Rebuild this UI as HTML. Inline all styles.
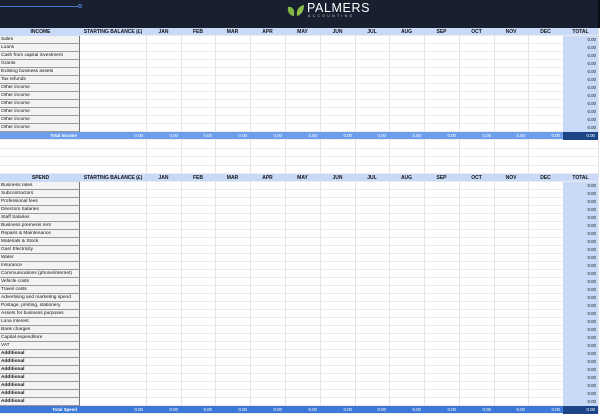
<!DOCTYPE html>
<html><head><meta charset="utf-8"><style>
*{margin:0;padding:0;box-sizing:border-box}
body{width:600px;height:414px;overflow:hidden;background:#fff;font-family:"Liberation Sans",Arial,sans-serif;position:relative}
#hd{position:absolute;left:0;top:0;width:600px;height:28px;background:#182030}
.vl{position:absolute;top:28px;height:386px;width:1px;background:#e3e3e3}
#g{position:absolute;left:0;top:28px;width:598px}
.r{position:relative;height:8px;border-bottom:1px solid #ececec;font-size:4.8px;line-height:8px;color:#111}
.l{position:absolute;left:0;top:0;width:80px;height:8px;background:#f3f3f3;border-right:1px solid #777;border-bottom:1px solid #999;padding-left:1px;white-space:nowrap;overflow:hidden}
.t{position:absolute;left:563px;top:0;width:35px;height:8px;background:#c9daf8;text-align:right;padding-right:2px;font-size:4.4px}
.h{background:#c9daf8;font-weight:bold;font-size:5px}
.h span{position:absolute;top:0;text-align:center}
.h .l{background:#c9daf8;text-align:center;border:none}
.tot{background:#6d9eeb;color:#fff;font-size:4.4px}
.tot span{position:absolute;top:0;text-align:right;padding-right:3px}
.ts{background:#3c78d8}
.b{font-weight:bold}
.e{height:8.5px}
</style></head><body>
<div id="hd">
<div style="position:absolute;left:0;top:6px;width:79px;height:1px;background:#4a78c8"></div>
<div style="position:absolute;left:78px;top:4px;width:4px;height:4px;border:1px solid #4a78c8;border-radius:50%"></div>
<svg style="position:absolute;left:287px;top:4px" width="18" height="14" viewBox="0 0 18 14">
<path d="M1 3 C5 2 8 5 7 12 C3 12 0 8 1 3Z" fill="#7fb942"/>
<path d="M10 12 C9 6 12 2 17 1 C17 7 14 11 10 12Z" fill="#8cc04b"/>
</svg>
<div style="position:absolute;left:307px;top:2px;color:#fff;font-size:12.5px;letter-spacing:0.6px;line-height:13px">PALMERS</div>
<div style="position:absolute;left:308px;top:14px;color:#ccc;font-size:3.5px;letter-spacing:2.3px;line-height:4px">ACCOUNTING</div>
<div style="position:absolute;left:598px;top:0;width:2px;height:28px;background:#0b0f18"></div>
</div>
<div class="vl" style="left:146px"></div><div class="vl" style="left:181px"></div><div class="vl" style="left:215px"></div><div class="vl" style="left:250px"></div><div class="vl" style="left:285px"></div><div class="vl" style="left:320px"></div><div class="vl" style="left:355px"></div><div class="vl" style="left:389px"></div><div class="vl" style="left:424px"></div><div class="vl" style="left:459px"></div><div class="vl" style="left:494px"></div><div class="vl" style="left:528px"></div><div class="vl" style="left:598px"></div>
<div id="g">
<div class="r h"><div class="l">INCOME</div><span style="left:80px;width:66px">STARTING BALANCE (£)</span><span style="left:146px;width:35px">JAN</span><span style="left:181px;width:34px">FEB</span><span style="left:215px;width:35px">MAR</span><span style="left:250px;width:35px">APR</span><span style="left:285px;width:35px">MAY</span><span style="left:320px;width:35px">JUN</span><span style="left:355px;width:34px">JUL</span><span style="left:389px;width:35px">AUG</span><span style="left:424px;width:35px">SEP</span><span style="left:459px;width:35px">OCT</span><span style="left:494px;width:34px">NOV</span><span style="left:528px;width:35px">DEC</span><span style="left:563px;width:35px">TOTAL</span></div>
<div class="r"><div class="l">Sales</div><div class="t">0.00</div></div>
<div class="r"><div class="l">Loans</div><div class="t">0.00</div></div>
<div class="r"><div class="l">Cash from capital investment</div><div class="t">0.00</div></div>
<div class="r"><div class="l">Grants</div><div class="t">0.00</div></div>
<div class="r"><div class="l">Existing business assets</div><div class="t">0.00</div></div>
<div class="r"><div class="l">Tax refunds</div><div class="t">0.00</div></div>
<div class="r"><div class="l">Other income</div><div class="t">0.00</div></div>
<div class="r"><div class="l">Other income</div><div class="t">0.00</div></div>
<div class="r"><div class="l">Other income</div><div class="t">0.00</div></div>
<div class="r"><div class="l">Other income</div><div class="t">0.00</div></div>
<div class="r"><div class="l">Other income</div><div class="t">0.00</div></div>
<div class="r"><div class="l">Other income</div><div class="t">0.00</div></div>
<div class="r tot"><span style="left:0;width:80px;font-weight:bold">Total Income</span><span style="left:80px;width:66px">0.00</span><span style="left:146px;width:35px">0.00</span><span style="left:181px;width:34px">0.00</span><span style="left:215px;width:35px">0.00</span><span style="left:250px;width:35px">0.00</span><span style="left:285px;width:35px">0.00</span><span style="left:320px;width:35px">0.00</span><span style="left:355px;width:34px">0.00</span><span style="left:389px;width:35px">0.00</span><span style="left:424px;width:35px">0.00</span><span style="left:459px;width:35px">0.00</span><span style="left:494px;width:34px">0.00</span><span style="left:528px;width:35px">0.00</span><span style="left:563px;width:35px;background:#1c4587;height:8px">0.00</span></div>
<div class="r e"></div><div class="r e"></div><div class="r e"></div><div class="r e"></div>
<div class="r h"><div class="l">SPEND</div><span style="left:80px;width:66px">STARTING BALANCE (£)</span><span style="left:146px;width:35px">JAN</span><span style="left:181px;width:34px">FEB</span><span style="left:215px;width:35px">MAR</span><span style="left:250px;width:35px">APR</span><span style="left:285px;width:35px">MAY</span><span style="left:320px;width:35px">JUN</span><span style="left:355px;width:34px">JUL</span><span style="left:389px;width:35px">AUG</span><span style="left:424px;width:35px">SEP</span><span style="left:459px;width:35px">OCT</span><span style="left:494px;width:34px">NOV</span><span style="left:528px;width:35px">DEC</span><span style="left:563px;width:35px">TOTAL</span></div>
<div class="r"><div class="l">Business rates</div><div class="t">0.00</div></div>
<div class="r"><div class="l">Subcontractors</div><div class="t">0.00</div></div>
<div class="r"><div class="l">Professional fees</div><div class="t">0.00</div></div>
<div class="r"><div class="l">Directors Salaries</div><div class="t">0.00</div></div>
<div class="r"><div class="l">Staff Salaries</div><div class="t">0.00</div></div>
<div class="r"><div class="l">Business premesis rent</div><div class="t">0.00</div></div>
<div class="r"><div class="l">Repairs &amp; Maintenance</div><div class="t">0.00</div></div>
<div class="r"><div class="l">Materials &amp; Stock</div><div class="t">0.00</div></div>
<div class="r"><div class="l">Gas/ Electricity</div><div class="t">0.00</div></div>
<div class="r"><div class="l">Water</div><div class="t">0.00</div></div>
<div class="r"><div class="l">Insurance</div><div class="t">0.00</div></div>
<div class="r"><div class="l">Communications (phone/internet)</div><div class="t">0.00</div></div>
<div class="r"><div class="l">Vehicle costs</div><div class="t">0.00</div></div>
<div class="r"><div class="l">Travel costs</div><div class="t">0.00</div></div>
<div class="r"><div class="l">Advertising and marketing spend</div><div class="t">0.00</div></div>
<div class="r"><div class="l">Postage, printing, stationery</div><div class="t">0.00</div></div>
<div class="r"><div class="l">Assets for business purposes</div><div class="t">0.00</div></div>
<div class="r"><div class="l">Lona interest</div><div class="t">0.00</div></div>
<div class="r"><div class="l">Bank charges</div><div class="t">0.00</div></div>
<div class="r"><div class="l">Capital expenditure</div><div class="t">0.00</div></div>
<div class="r"><div class="l">VAT</div><div class="t">0.00</div></div>
<div class="r"><div class="l b">Additional</div><div class="t">0.00</div></div>
<div class="r"><div class="l b">Additional</div><div class="t">0.00</div></div>
<div class="r"><div class="l b">Additional</div><div class="t">0.00</div></div>
<div class="r"><div class="l b">Additional</div><div class="t">0.00</div></div>
<div class="r"><div class="l b">Additional</div><div class="t">0.00</div></div>
<div class="r"><div class="l b">Additional</div><div class="t">0.00</div></div>
<div class="r"><div class="l b">Additional</div><div class="t">0.00</div></div>
<div class="r tot ts"><span style="left:0;width:80px;font-weight:bold">Total Spend</span><span style="left:80px;width:66px">0.00</span><span style="left:146px;width:35px">0.00</span><span style="left:181px;width:34px">0.00</span><span style="left:215px;width:35px">0.00</span><span style="left:250px;width:35px">0.00</span><span style="left:285px;width:35px">0.00</span><span style="left:320px;width:35px">0.00</span><span style="left:355px;width:34px">0.00</span><span style="left:389px;width:35px">0.00</span><span style="left:424px;width:35px">0.00</span><span style="left:459px;width:35px">0.00</span><span style="left:494px;width:34px">0.00</span><span style="left:528px;width:35px">0.00</span><span style="left:563px;width:35px;background:#1c4587;height:8px">0.00</span></div>
</div>
</body></html>
